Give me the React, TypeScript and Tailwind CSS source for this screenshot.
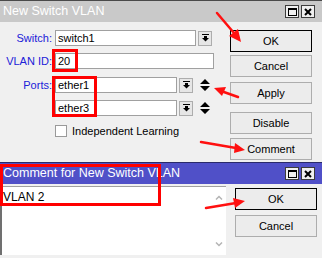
import React from 'react';

const DropGlyph: React.FC = () => (
  <svg width="7" height="8" viewBox="0 0 7 8" fill="#000">
    <rect x="0" y="0" width="7" height="1" />
    <rect x="2" y="2" width="3" height="2" />
    <path d="M0 4h7L3.5 7.5z" />
  </svg>
);

const DropButton: React.FC<{ className?: string }> = ({ className = '' }) => (
  <div className={`flex h-[15px] w-[14px] items-center justify-center border border-[#adadad] bg-[#e6e6e6] ${className}`}>
    <DropGlyph />
  </div>
);

const UpDown: React.FC = () => (
  <svg width="10" height="12" viewBox="0 0 10 12" fill="#000" className="ml-[7px]">
    <path d="M5 0L10 5H0z M0 7h10L5 12z" />
  </svg>
);

const TitleButtons: React.FC = () => (
  <div className="flex gap-[2px]">
    <div className="flex h-[13px] w-[14px] items-center justify-center border border-[#3c3c3c] bg-[#f0f0f0]">
      <div className="h-[8px] w-[9px] border border-t-2 border-black" />
    </div>
    <div className="flex h-[13px] w-[14px] items-center justify-center border border-[#3c3c3c] bg-[#f0f0f0]">
      <svg width="8" height="8" viewBox="0 0 8 8" stroke="#000" strokeWidth="2">
        <path d="M1 1l6 6M7 1l-6 6" />
      </svg>
    </div>
  </div>
);

const Field: React.FC<{ value?: string; width: string }> = ({ value, width }) => (
  <div className={`flex h-[16px] items-center border border-[#a0a0a0] bg-white pl-[2px] text-black ${width}`}>
    {value}
  </div>
);

const WinButton: React.FC<{ label: string; primary?: boolean; className?: string }> = ({ label, primary, className = '' }) => (
  <div
    className={`flex h-[22px] w-[82px] items-center justify-center bg-[#ececec] text-black ${
      primary ? 'border border-black' : 'border border-[#adadad]'
    } ${className}`}
  >
    {label}
  </div>
);

export default function App() {
  return (
    <div
      className="relative h-[258px] w-[322px] overflow-hidden bg-[#f0f0f0] text-[11px] leading-none"
      style={{ fontFamily: '"Liberation Sans", Arial, sans-serif' }}
    >
      {/* New Switch VLAN window */}
      <div className="flex h-[162px] flex-col border-t border-[#4a4a4a]">
        <div className="flex h-[21px] items-center justify-between bg-[#c9c9c9] pl-[3px] pr-[7px] text-[12.5px] text-white">
          <span>New Switch VLAN</span>
          <TitleButtons />
        </div>
        <div className="flex flex-1">
          <div className="flex w-[230px] flex-col pt-[8px]">
            <div className="flex h-[16px] items-center">
              <span className="w-[52px] text-right text-[#2020d8]">Switch:</span>
              <Field value="switch1" width="ml-[3px] w-[141px]" />
              <DropButton className="ml-[2px]" />
            </div>
            <div className="mt-[7px] flex h-[16px] items-center">
              <span className="w-[52px] text-right text-[#2020d8]">VLAN ID:</span>
              <Field value="20" width="ml-[3px] w-[159px]" />
            </div>
            <div className="mt-[8px] flex h-[16px] items-center">
              <span className="w-[52px] text-right text-[#2020d8]">Ports:</span>
              <Field value="ether1" width="ml-[3px] w-[122px]" />
              <DropButton className="ml-[2px]" />
              <UpDown />
            </div>
            <div className="mt-[7px] flex h-[16px] items-center">
              <span className="w-[52px]" />
              <Field value="ether3" width="ml-[3px] w-[122px]" />
              <DropButton className="ml-[2px]" />
              <UpDown />
            </div>
            <div className="mt-[9px] flex items-center pl-[55px]">
              <div className="h-[12px] w-[12px] border border-[#9a9a9a] bg-white" />
              <span className="ml-[5px] text-black">Independent Learning</span>
            </div>
          </div>
          <div className="flex flex-col pt-[8px]">
            <WinButton label="OK" primary />
            <WinButton label="Cancel" className="mt-[3px]" />
            <WinButton label="Apply" className="mt-[5px]" />
            <WinButton label="Disable" className="mt-[8px]" />
            <WinButton label="Comment" className="mt-[4px]" />
          </div>
        </div>
      </div>

      {/* Comment window */}
      <div className="flex h-[96px] flex-col border-t border-[#2a2a6a]">
        <div className="flex h-[21px] items-center justify-between bg-[#5050c8] pl-[3px] pr-[7px] text-[12.5px] text-white">
          <span>Comment for New Switch VLAN</span>
          <TitleButtons />
        </div>
        <div className="flex flex-1 pt-[2px]">
          <div className="relative h-[69px] w-[226px] border-l-2 border-t border-l-[#707070] border-t-[#a0a0a0] bg-white">
            <div className="pl-[1px] pt-[4px] text-[12px] text-black">VLAN 2</div>
            <div className="absolute right-[0px] top-0 flex h-full w-[14px] flex-col items-center justify-between py-[8px]">
              <svg width="8" height="5" viewBox="0 0 8 5" stroke="#b4b4b4" strokeWidth="1.5" fill="none">
                <path d="M1 4.5L4 1.5L7 4.5" />
              </svg>
              <svg width="8" height="5" viewBox="0 0 8 5" stroke="#b4b4b4" strokeWidth="1.5" fill="none">
                <path d="M1 0.5L4 3.5L7 0.5" />
              </svg>
            </div>
          </div>
          <div className="flex flex-col pl-[9px] pt-[2px]">
            <WinButton label="OK" primary />
            <WinButton label="Cancel" className="mt-[5px]" />
          </div>
        </div>
      </div>

      {/* red annotations */}
      <div className="absolute left-[52px] top-[49px] h-[23px] w-[26px] border-[3px] border-[#ff0000]" />
      <div className="absolute left-[52px] top-[76px] h-[41px] w-[45px] border-[3px] border-[#ff0000]" />
      <div className="absolute left-0 top-[164px] h-[42px] w-[161px] border-[3px] border-[#ff0000]" />
      <svg className="absolute left-0 top-0" width="322" height="258" viewBox="0 0 322 258">
        <g stroke="#ff1010" strokeWidth="2.5" strokeLinecap="round">
          <line x1="217" y1="13" x2="234" y2="33" />
          <line x1="238" y1="97" x2="221" y2="91" />
          <line x1="201" y1="142" x2="236" y2="148" />
          <line x1="206" y1="208" x2="236" y2="203" />
        </g>
        <g fill="#ff1010">
          <path d="M241 42L229 36L238 29z" />
          <path d="M214 88L226 87L222 96z" />
          <path d="M245 150L234 153L235 143z" />
          <path d="M245 201L235 208L233 198z" />
        </g>
      </svg>
    </div>
  );
}
